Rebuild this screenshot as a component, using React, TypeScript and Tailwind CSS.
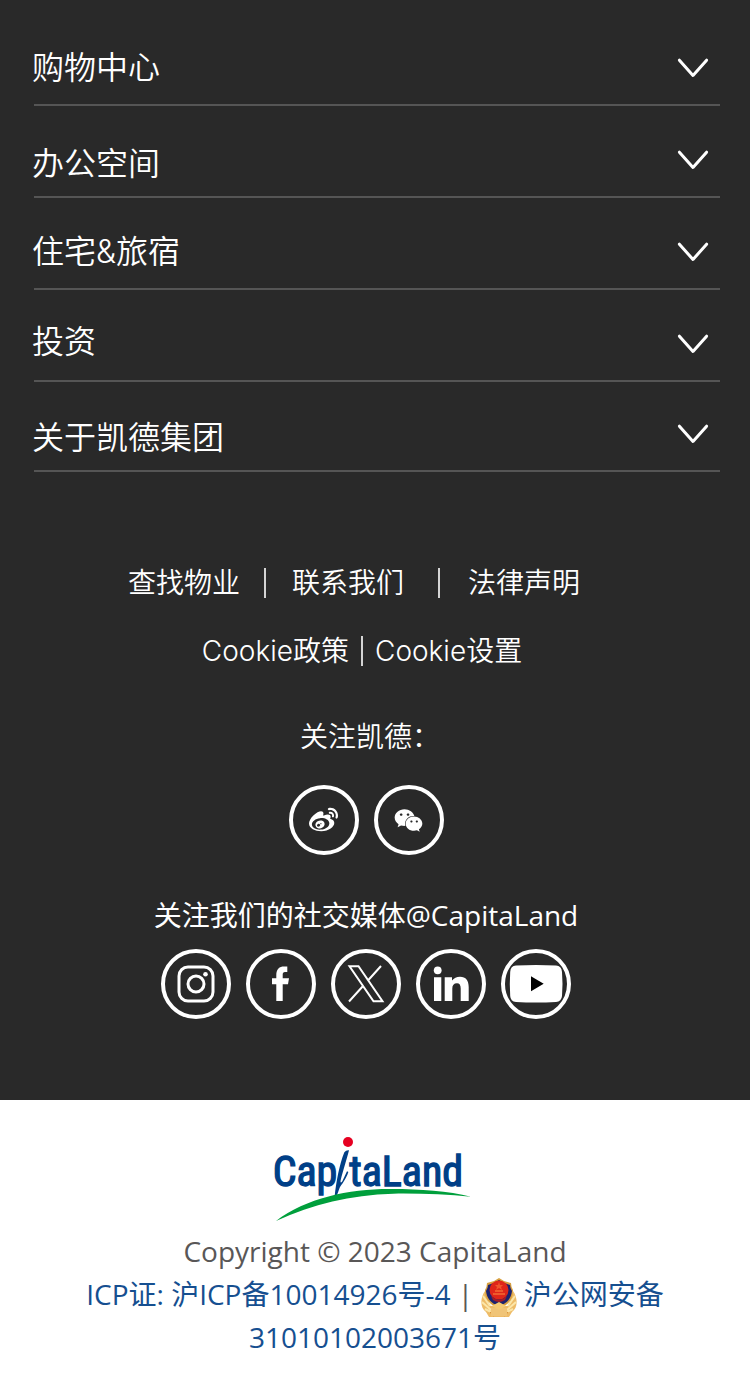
import type { ReactNode } from "react";
import { FaWeibo, FaWeixin } from "react-icons/fa6";

const sections = [
  { label: "购物中心", spacing: "pb-4" },
  { label: "办公空间", spacing: "pb-3" },
  { label: "住宅&旅宿", spacing: "pb-4" },
  { label: "投资", spacing: "pb-[18px]" },
  { label: "关于凯德集团", spacing: "pb-3" },
];

function Chevron() {
  return (
    <svg viewBox="0 0 32 20" className="mr-[11px] mb-[26px] h-5 w-8" aria-hidden="true">
      <path d="M2.4 2.2 16 17.5 29.6 2.2" fill="none" stroke="#fff" strokeWidth="3" strokeLinecap="round" strokeLinejoin="round" />
    </svg>
  );
}

function Divider() {
  return <span className="h-[30px] w-[2px] bg-[#d4d4d4]" />;
}

function Social({ label, children }: { label: string; children: ReactNode }) {
  return (
    <a
      href="#"
      aria-label={label}
      className="flex size-[70px] items-center justify-center rounded-full border-4 border-white text-white"
    >
      {children}
    </a>
  );
}

function Glyph({ children }: { children: ReactNode }) {
  return (
    <svg viewBox="4 4 62 62" className="size-[62px]" fill="currentColor" aria-hidden="true">
      {children}
    </svg>
  );
}

function Logo() {
  return (
    <svg
      viewBox="0 0 660 315"
      className="mr-[10px] h-[105px] w-[220px]"
      role="img"
      aria-label="CapitaLand"
      fontFamily="'Roboto Condensed','Liberation Sans Narrow','Liberation Sans',sans-serif"
      fontSize="126"
      fontWeight="400"
    >
      <g fill="#003f87" stroke="#003f87" strokeWidth="4">
        <text x="38" y="182">Cap</text>
        <text x="268" y="182">taLand</text>
      </g>
      <path d="M253 82Q258 75 267 76C261 101 249 137 242 166Q240 178 247 169L261 139 265 141C258 163 245 178 239 188L230 213H224C229 170 238 119 253 82Z" fill="#003f87" />
      <circle cx="264" cy="51" r="15" fill="#e60021" />
      <path d="M48 288C140 218 270 191 395 192C480 192 565 198 633 215C560 208 480 205 400 206C270 210 160 237 48 288Z" fill="#009f3c" />
    </svg>
  );
}

function Emblem() {
  return (
    <svg viewBox="0 0 36 40" className="-my-1 inline-block h-10 w-9 align-middle" aria-hidden="true">
      <path d="M4 13C-1 20-1 30 5 34L8 39H28L31 34C37 30 37 20 32 13L27 28H9Z" fill="#eebc68" />
      <path d="M2 18 9 28M1 24 10 32M4 31 12 35M34 18 27 28M35 24 26 32M32 31 24 35" stroke="#fbe6a9" strokeWidth="2" />
      <path d="M9 35Q18 28 27 35M12 38Q18 33 24 38" fill="none" stroke="#d99039" strokeWidth="1.5" />
      <path d="M10 30H26V38H10Z" fill="#f0c477" />
      <path d="M18 0 23 3 30 5Q30 9 32 12C32 21 28 27 18 30C8 27 4 21 4 12Q6 9 6 5L13 3Z" fill="#d8a03f" />
      <path d="M18 2 23 5 29 7Q29 10 31 13C30 20 27 25 18 28C9 25 6 20 5 13Q7 10 7 7L13 5Z" fill="#1c2370" />
      <circle cx="18" cy="12" r="9.5" fill="#df2619" />
      <path d="M18 4 19 7H22L20 9 21 12 18 10 15 12 16 9 14 7H17Z" fill="#f0562c" />
      <path d="M12 15H24V17H12ZM14 12H22V14H14Z" fill="#ee5a2b" />
      <path d="M10 18Q18 25 26 18L24 22Q18 26 12 22Z" fill="#a31c26" />
      <path d="M11 28 18 24 25 28 18 32Z" fill="#f5cb73" />
    </svg>
  );
}

export default function App() {
  return (
    <div className="bg-white font-['Open_Sans','Noto_Sans_CJK_SC',sans-serif] text-[28px]">
      <footer>
        <div className="bg-[#292929] pt-[14px] pb-[81px] font-[350] text-white">
          <nav className="pr-[30px] pl-[34px] font-['Inter','Noto_Sans_CJK_SC',sans-serif]">
            {sections.map(({ label, spacing }) => (
              <button
                key={label}
                type="button"
                className="flex h-[92px] w-full items-end justify-between border-b-2 border-[#555] text-[32px] leading-10 font-[350] last:h-[90px]"
              >
                <span className={`-ml-0.5 ${spacing}`}>{label}</span>
                <Chevron />
              </button>
            ))}
          </nav>

          <div className="flex flex-col items-center pr-[18px] font-['Inter','Noto_Sans_CJK_SC',sans-serif] leading-10">
            <div className="mt-[91px] flex items-center pr-6">
              <a href="#" className="pr-6">查找物业</a>
              <Divider />
              <a href="#" className="pr-[34px] pl-[26px]">联系我们</a>
              <Divider />
              <a href="#" className="pl-7">法律声明</a>
            </div>
            <div className="mt-7 flex items-center gap-3 pr-2">
              <a href="#">Cookie政策</a>
              <Divider />
              <button type="button" className="font-[350]">Cookie设置</button>
            </div>
            <p className="mt-[46px] pl-2">关注凯德：</p>
            <div className="mt-7 flex gap-[15px]">
              <Social label="微博"><FaWeibo className="size-[29px]" /></Social>
              <Social label="微信"><FaWeixin className="size-[29px]" /></Social>
            </div>
          </div>

          <div className="flex flex-col items-center pr-[18px]">
            <p className="mt-10 leading-10 font-normal">关注我们的社交媒体@CapitaLand</p>
            <div className="mt-[14px] flex gap-[15px]">
              <Social label="Instagram">
                <Glyph>
                  <rect x="18" y="18" width="34" height="34" rx="9" fill="none" stroke="currentColor" strokeWidth="3" />
                  <circle cx="35" cy="35" r="8" fill="none" stroke="currentColor" strokeWidth="3" />
                  <circle cx="44.5" cy="25.2" r="2.3" />
                </Glyph>
              </Social>
              <Social label="Facebook">
                <Glyph>
                  <path d="M30.3 52V35.3H26V29.3H30.3V26C30.3 20 33.5 17.5 38 17.5H41.3V23H39C37.3 23 36.7 24 36.7 25.5V29.3H43L42 35.3H36.7V52Z" />
                </Glyph>
              </Social>
              <Social label="X">
                <Glyph>
                  <path d="M18.5 17.3H27.5L51.5 52.3H42.5ZM50 17 36.5 32M18 52.5 32.5 36.5" fill="none" stroke="currentColor" strokeWidth="2" />
                </Glyph>
              </Social>
              <Social label="LinkedIn">
                <Glyph>
                  <circle cx="21.7" cy="21.3" r="3.9" />
                  <path d="M18 28.3H25.3V52H18ZM28.7 28.3H36V31.5C38 29 40.5 27.7 44 27.7C50 27.7 52.7 31.5 52.7 38V52H44.7V39.5C44.7 36 43.5 34.3 41 34.3C37.8 34.3 36.3 36.3 36.3 39.5V52H28.7Z" />
                </Glyph>
              </Social>
              <Social label="YouTube">
                <Glyph>
                  <path d="M15 16.6Q35 15.4 55 16.6Q60.5 17 61 23Q62 35 61 47Q60.5 52.5 55 52.9Q35 54 15 52.9Q9.5 52.5 9.2 47Q8.4 35 9.2 23Q9.5 17 15 16.6Z" />
                  <path d="M30 27.3 42.7 34.8 30 42.3Z" fill="#000" />
                </Glyph>
              </Social>
            </div>
          </div>
        </div>

        <div className="flex flex-col items-center px-[75px] pt-[25px] pb-[34px] text-center leading-[43px] font-normal text-[#595757]">
          <Logo />
          <p>Copyright © 2023 CapitaLand</p>
          <p>
            <a href="#" className="text-[#164f90]">ICP证: 沪ICP备10014926号-4</a>
            {" | "}
            <a href="#" className="text-[#164f90]"><Emblem /> 沪公网安备31010102003671号</a>
          </p>
        </div>
      </footer>
    </div>
  );
}
